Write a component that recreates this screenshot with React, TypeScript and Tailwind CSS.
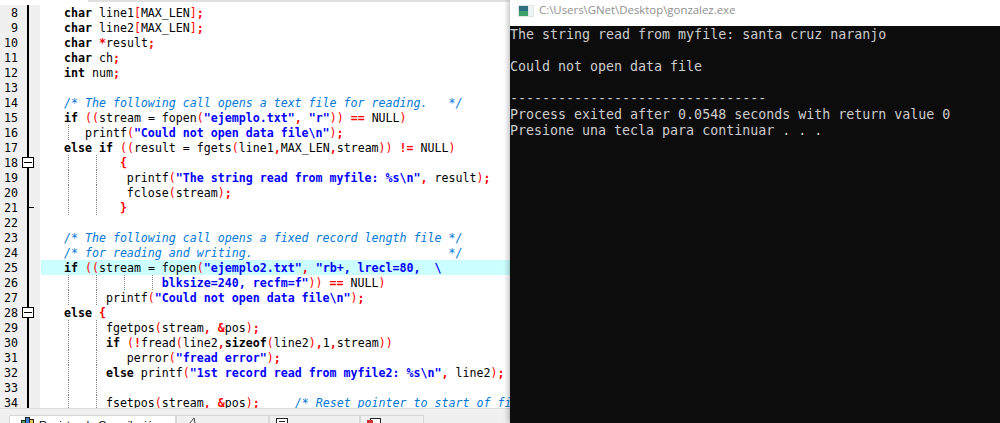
import React from "react";

const mono = "font-['DejaVu_Sans_Mono','Liberation_Mono',monospace]";

type Row = { n: number; text: string; guides?: number[]; fold?: "box" | "end"; hl?: boolean; contString?: boolean };

const rows: Row[] = [
  { n: 8, text: "   char line1[MAX_LEN];" },
  { n: 9, text: "   char line2[MAX_LEN];" },
  { n: 10, text: "   char *result;" },
  { n: 11, text: "   char ch;" },
  { n: 12, text: "   int num;" },
  { n: 13, text: "" },
  { n: 14, text: "   /* The following call opens a text file for reading.   */" },
  { n: 15, text: '   if ((stream = fopen("ejemplo.txt", "r")) == NULL)' },
  { n: 16, text: '      printf("Could not open data file\\n");', guides: [68] },
  { n: 17, text: "   else if ((result = fgets(line1,MAX_LEN,stream)) != NULL)" },
  { n: 18, text: "           {", guides: [68, 96], fold: "box" },
  { n: 19, text: '            printf("The string read from myfile: %s\\n", result);', guides: [68, 96] },
  { n: 20, text: "            fclose(stream);", guides: [68, 96] },
  { n: 21, text: "           }", guides: [68, 96], fold: "end" },
  { n: 22, text: "" },
  { n: 23, text: "   /* The following call opens a fixed record length file */" },
  { n: 24, text: "   /* for reading and writing.                            */" },
  { n: 25, text: '   if ((stream = fopen("ejemplo2.txt", "rb+, lrecl=80,  \\', hl: true },
  { n: 26, text: '                 blksize=240, recfm=f")) == NULL)', guides: [68, 96, 124, 152], contString: true },
  { n: 27, text: '         printf("Could not open data file\\n");', guides: [68, 96] },
  { n: 28, text: "   else {", fold: "box" },
  { n: 29, text: "         fgetpos(stream, &pos);", guides: [68, 96] },
  { n: 30, text: "         if (!fread(line2,sizeof(line2),1,stream))", guides: [68, 96] },
  { n: 31, text: '            perror("fread error");', guides: [68, 96] },
  { n: 32, text: '         else printf("1st record read from myfile2: %s\\n", line2);', guides: [68, 96] },
  { n: 33, text: "", guides: [68, 96] },
  { n: 34, text: "         fsetpos(stream, &pos);     /* Reset pointer to start of file */", guides: [68, 96] },
];

function tokens(row: Row) {
  const out: React.ReactNode[] = [];
  let src = row.text;
  let key = 0;
  if (row.contString) {
    const end = src.indexOf('"') + 1;
    const head = src.slice(0, end);
    const spaces = head.length - head.trimStart().length;
    out.push(head.slice(0, spaces));
    out.push(<span key={key++} className="font-bold text-[#0000ff]">{head.slice(spaces)}</span>);
    src = src.slice(end);
  }
  const re = /(\/\*.*$)|("[^"]*"?)|\b(char|int|if|else|sizeof)\b|(==|!=|[;,{}*&!])|([\[\]()])/g;
  let last = 0;
  let m: RegExpExecArray | null;
  while ((m = re.exec(src))) {
    if (m.index > last) out.push(src.slice(last, m.index));
    if (m[1]) out.push(<span key={key++} className="italic text-[#0078d7]">{m[1]}</span>);
    else if (m[2]) out.push(<span key={key++} className="font-bold text-[#0000ff]">{m[2]}</span>);
    else if (m[3]) out.push(<span key={key++} className="font-bold text-black">{m[3]}</span>);
    else if (m[4]) out.push(<span key={key++} className="font-bold text-[#ff0000]">{m[4]}</span>);
    else out.push(<span key={key++} className="text-[#ff0000]">{m[5]}</span>);
    last = m.index + m[0].length;
  }
  if (last < src.length) out.push(src.slice(last));
  return out;
}

function CodeRow({ row }: { row: Row }) {
  return (
    <div className="flex h-[15px] shrink-0">
      <div className="flex w-[40px] shrink-0 bg-[#f0f0f0]">
        <span className="w-[18px] text-right text-black leading-[17px]">{row.n}</span>
        <span className="w-[9px]" />
        <span className="relative w-[2px] bg-black">
          {row.fold === "box" && (
            <span className="absolute left-[-5px] top-[2px] flex h-[11px] w-[12px] items-center justify-center border border-black bg-white">
              <span className="h-px w-[8px] bg-black" />
            </span>
          )}
          {row.fold === "end" && <span className="absolute left-[2px] top-[7px] h-px w-[5px] bg-black" />}
        </span>
      </div>
      <div className={`relative ml-px flex-1 overflow-hidden whitespace-pre pl-[2px] leading-[17px] text-black ${row.hl ? "bg-[#ccffff]" : ""}`}>
        {row.guides?.map((g) => (
          <span key={g} className="absolute top-0 h-[15px] border-l border-dotted border-[#808080]" style={{ left: g - 41 }} />
        ))}
        <span className="relative">{tokens(row)}</span>
      </div>
    </div>
  );
}

function Tab({ w, active, children, label }: { w: string; active?: boolean; children: React.ReactNode; label?: string }) {
  return (
    <div className={`flex h-[8px] shrink-0 items-start overflow-hidden border border-b-0 ${w} ${active ? "border-[#d8d8d8] bg-white" : "border-[#d8d8d8] bg-[#f0f0f0]"}`}>
      {children}
      {label && <span className="ml-[5px] mt-[2px] whitespace-nowrap font-['Liberation_Sans',sans-serif] text-[11px] leading-[14px] text-black">{label}</span>}
    </div>
  );
}

export default function App() {
  return (
    <div className="flex h-[423px] w-[1000px] overflow-hidden bg-white">
      <div className="flex w-[510px] shrink-0 flex-col">
        <div className="flex h-[5px] shrink-0">
          <div className="w-[88px]" />
          <div className="h-[2px] flex-1 bg-[#e0e0e0]" />
        </div>
        <div className={`flex h-[403px] shrink-0 flex-col overflow-hidden text-[11.62px] ${mono}`}>
          {rows.map((r) => (
            <CodeRow key={r.n} row={r} />
          ))}
        </div>
        <div className="flex flex-1 items-end overflow-hidden border-t border-[#dcdcdc] bg-[#f0f0f0] pl-[9px]">
          <Tab w="w-[167px]" active label="Registro de Compilación">
            <svg width="13" height="7" viewBox="0 0 13 7" className="ml-[11px] mt-[1px] shrink-0">
              <rect x="0.5" y="3.5" width="4" height="6" fill="#3aa655" stroke="#222" />
              <rect x="4.5" y="0.5" width="4" height="9" fill="#3b7fd0" stroke="#222" />
              <rect x="8.5" y="2.5" width="4" height="7" fill="#e8c84a" stroke="#222" />
            </svg>
          </Tab>
          <Tab w="w-[93px]">
            <svg width="8" height="5" viewBox="0 0 8 5" className="ml-[12px] mt-[2px] shrink-0">
              <path d="M5 0 L1 5 M5 0 L6 5" fill="none" stroke="#444" strokeWidth="1" />
            </svg>
          </Tab>
          <Tab w="w-[91px]">
            <svg width="12" height="6" viewBox="0 0 12 6" className="ml-[6px] mt-[2px] shrink-0">
              <rect x="0.5" y="0.5" width="11" height="8" fill="#fff" stroke="#222" />
              <path d="M3 3.5 H9" stroke="#222" />
            </svg>
          </Tab>
          <Tab w="w-[64px]">
            <svg width="14" height="6" viewBox="0 0 14 6" className="ml-[6px] mt-[2px] shrink-0">
              <rect x="3.5" y="0.5" width="10" height="8" fill="#fff" stroke="#222" />
              <rect x="0" y="2" width="6" height="4" fill="#c33" />
            </svg>
          </Tab>
        </div>
      </div>
      <div className="relative z-10 flex flex-1 flex-col shadow-[-2px_0_5px_rgba(0,0,0,0.25)]">
        <div className="flex h-[26px] shrink-0 items-center bg-white pl-[8px]">
          <svg width="16" height="12" viewBox="0 0 16 12" className="mb-[4px] shrink-0">
            <rect width="16" height="12" fill="#dfe6e8" />
            <rect x="1" y="1" width="9" height="10" fill="#2c6e7f" />
            <rect x="1" y="6" width="9" height="5" fill="#3f9f6a" />
            <rect x="11" y="1" width="4" height="10" fill="#eef3f4" />
          </svg>
          <span className="mb-[7px] ml-[5px] whitespace-nowrap font-['Open_Sans',sans-serif] text-[11.4px] text-[#8f8f8f]">C:\Users\GNet\Desktop\gonzalez.exe</span>
        </div>
        <div className={`flex-1 whitespace-pre bg-[#0c0c0c] pt-px text-[13.3px] leading-[16px] text-[#cccccc] ${mono}`}>
          <div className="h-[16px]">The string read from myfile: santa cruz naranjo</div>
          <div className="h-[16px]" />
          <div className="h-[16px]">Could not open data file</div>
          <div className="h-[16px]" />
          <div className="h-[16px]">--------------------------------</div>
          <div className="h-[16px]">Process exited after 0.0548 seconds with return value 0</div>
          <div className="h-[16px]">Presione una tecla para continuar . . .</div>
        </div>
      </div>
    </div>
  );
}
